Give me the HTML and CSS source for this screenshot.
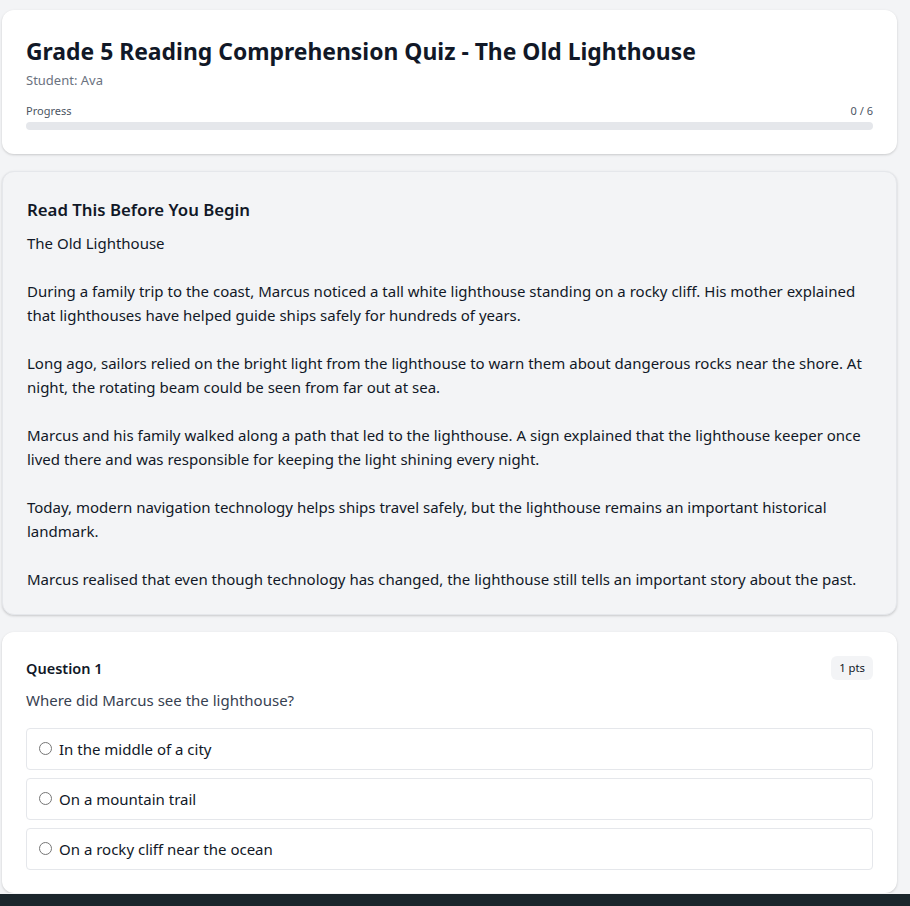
FILE: index.html
```html
<!DOCTYPE html>
<html lang="en">
<head>
<meta charset="utf-8">
<title>Grade 5 Reading Comprehension Quiz - The Old Lighthouse</title>
<link rel="stylesheet" href="styles.css">
</head>
<body>
<main class="page">
  <section class="card header-card">
    <h1 class="quiz-title">Grade 5 Reading Comprehension Quiz - The Old Lighthouse</h1>
    <div class="student">Student: Ava</div>
    <div class="progress-row">
      <span>Progress</span>
      <span>0 / 6</span>
    </div>
    <div class="progress-track"><div class="progress-fill" style="width:0%"></div></div>
  </section>

  <section class="card passage-card">
    <h2 class="passage-heading">Read This Before You Begin</h2>
    <div class="passage-text">The Old Lighthouse

During a family trip to the coast, Marcus noticed a tall white lighthouse standing on a rocky cliff. His mother explained that lighthouses have helped guide ships safely for hundreds of years.

Long ago, sailors relied on the bright light from the lighthouse to warn them about dangerous rocks near the shore. At night, the rotating beam could be seen from far out at sea.

Marcus and his family walked along a path that led to the lighthouse. A sign explained that the lighthouse keeper once lived there and was responsible for keeping the light shining every night.

Today, modern navigation technology helps ships travel safely, but the lighthouse remains an important historical landmark.

Marcus realised that even though technology has changed, the lighthouse still tells an important story about the past.</div>
  </section>

  <section class="card question-card">
    <div class="question-head">
      <span class="question-label">Question 1</span>
      <span class="points">1 pts</span>
    </div>
    <p class="question-text">Where did Marcus see the lighthouse?</p>
    <div class="options">
      <label class="option"><input type="radio" name="q1"><span>In the middle of a city</span></label>
      <label class="option"><input type="radio" name="q1"><span>On a mountain trail</span></label>
      <label class="option"><input type="radio" name="q1"><span>On a rocky cliff near the ocean</span></label>
    </div>
  </section>
</main>
<div class="bottom-bar"></div>
</body>
</html>
```
FILE: styles.css
```css
html, body {
  margin: 0;
  padding: 0;
}
body {
  background: #f3f4f6;
  font-family: "Noto Sans", "Open Sans", sans-serif;
  color: #111827;
  font-size: 15px;
  line-height: 24px;
}
.page {
  padding: 10px 13px 0 2px;
  display: flex;
  flex-direction: column;
  gap: 17px;
}
.card {
  background: #ffffff;
  border-radius: 12px;
  box-shadow: 0 1px 3px rgba(0,0,0,0.12), 0 1px 2px rgba(0,0,0,0.06);
  padding: 24px;
}
.quiz-title {
  margin: 0;
  font-size: 22.9px;
  line-height: 36px;
  font-weight: 700;
  color: #111827;
}
.student {
  font-size: 13px;
  line-height: 20px;
  color: #6b7280;
}
.progress-row {
  margin-top: 13px;
  display: flex;
  justify-content: space-between;
  font-size: 11px;
  line-height: 16px;
  color: #4b5563;
}
.progress-track {
  margin-top: 3px;
  height: 8px;
  border-radius: 999px;
  background: #e5e7eb;
  overflow: hidden;
}
.progress-fill {
  height: 100%;
  background: #3b82f6;
}
.passage-card {
  background: #f3f4f6;
  border: 1px solid #e5e7eb;
  padding-bottom: 23px;
}
.passage-heading {
  margin: 0;
  font-size: 16.8px;
  line-height: 28px;
  font-weight: 600;
  color: #111827;
}
.passage-text {
  margin-top: 7px;
  white-space: pre-wrap;
  color: #111827;
}
.question-card {
  padding-bottom: 23px;
}
.question-head {
  display: flex;
  justify-content: space-between;
  align-items: center;
  height: 24px;
}
.question-label {
  font-size: 14.5px;
  font-weight: 600;
  color: #111827;
}
.points {
  background: #f3f4f6;
  border-radius: 6px;
  padding: 0 8px;
  font-size: 11.3px;
  line-height: 24px;
  color: #111827;
}
.question-text {
  margin: 8px 0 0;
  color: #374151;
}
.options {
  margin-top: 16px;
  display: flex;
  flex-direction: column;
  gap: 8px;
}
.option {
  display: flex;
  align-items: center;
  border: 1px solid #e5e7eb;
  border-radius: 4px;
  padding: 8px 12px;
  color: #111827;
}
.option input {
  margin: 0 7px 0 0;
  width: 13px;
  height: 13px;
  position: relative;
  top: -1px;
}
.bottom-bar {
  position: fixed;
  left: 0;
  right: 0;
  bottom: 0;
  height: 12px;
  background: #1b262c;
}
```
